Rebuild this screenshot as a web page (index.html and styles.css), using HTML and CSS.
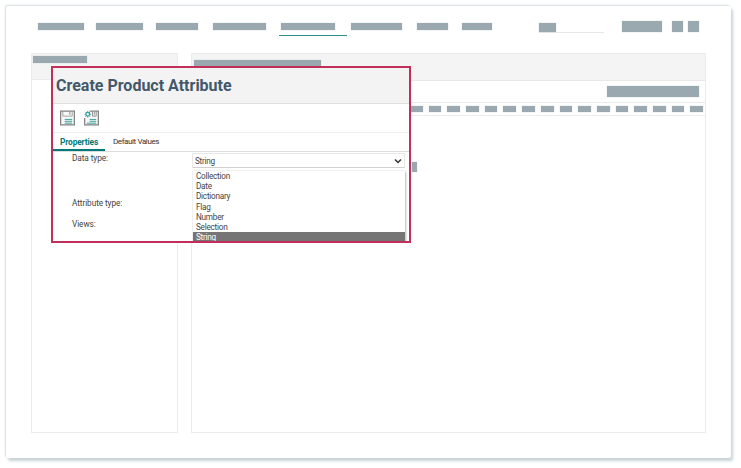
FILE: index.html
```html
<!DOCTYPE html>
<html lang="en">
<head>
    <meta charset="UTF-8">
    <meta name="viewport" content="width=device-width, initial-scale=1.0">
    <title>Create Product Attribute</title>
    <link rel="stylesheet" href="styles.css">
</head>
<body>
    <div class="window">
        <!-- Top navigation, blanked out -->
        <div class="topbar">
            <div class="nav">
                <div class="nav-item"><span class="bar w46"></span></div>
                <div class="nav-item"><span class="bar w47"></span></div>
                <div class="nav-item"><span class="bar w42"></span></div>
                <div class="nav-item"><span class="bar w53"></span></div>
                <div class="nav-item active"><span class="bar w54"></span></div>
                <div class="nav-item"><span class="bar w51"></span></div>
                <div class="nav-item"><span class="bar w31"></span></div>
                <div class="nav-item"><span class="bar w30"></span></div>
            </div>
            <div class="search"><span class="bar search-bar"></span></div>
            <div class="top-actions">
                <span class="bar action-wide"></span>
                <span class="bar action-small"></span>
                <span class="bar action-small"></span>
            </div>
        </div>

        <div class="panels">
            <div class="panel side-panel">
                <div class="side-head"><span class="bar w54"></span></div>
            </div>
            <div class="panel main-panel">
                <div class="main-head"><span class="bar w127"></span></div>
                <div class="main-tools"><span class="bar tools-bar"></span></div>
                <div class="main-tabs">
                    <span class="bar tab-bar"></span><span class="bar tab-bar"></span><span class="bar tab-bar"></span><span class="bar tab-bar"></span>
                    <span class="bar tab-bar"></span><span class="bar tab-bar"></span><span class="bar tab-bar"></span><span class="bar tab-bar"></span>
                    <span class="bar tab-bar"></span><span class="bar tab-bar"></span><span class="bar tab-bar"></span><span class="bar tab-bar"></span>
                    <span class="bar tab-bar"></span><span class="bar tab-bar"></span><span class="bar tab-bar"></span><span class="bar tab-bar"></span>
                </div>
            </div>
        </div>
    </div>

    <span class="bar stray-bar"></span>

    <!-- Highlighted dialog -->
    <div class="callout">
        <div class="callout-head">Create Product Attribute</div>
        <div class="toolbar">
            <svg class="tool-icon" viewBox="0 0 16 16" fill="none">
                <path d="M.7.7h14.600v14.600H.7z" stroke="#808080" stroke-width="1.300" fill="#f8f8f8"/>
                <path d="M3 1v5h10V1" stroke="#a0a0a0"/>
                <path d="M10.500 1.500v3" stroke="#808080"/>
                <path d="M5 9.500h8M5 11.500h8M5 13.500h8" stroke="#2f9c96"/>
            </svg>
            <svg class="tool-icon" viewBox="0 0 16 16" fill="none">
                <path d="M6 .7h9.300v14.600H.7V8" stroke="#808080" stroke-width="1.300" fill="#f8f8f8"/>
                <path d="M9 1v5h4V1M11 1.500v3" stroke="#8a8a8a"/>
                <path d="M6 9.500h7M6 11.500h7M3 13.500h10" stroke="#2f9c96"/>
                <circle cx="4" cy="4" r="2" stroke="#2f9c96" stroke-width="1.300"/>
                <path d="M4 .5v1.200M4 6.300v1.200M.5 4h1.200M6.300 4h1.200M1.500 1.500l.9.9M5.600 5.600l.9.9M1.500 6.500l.9-.9M5.600 2.400l.9-.9" stroke="#2f9c96"/>
            </svg>
        </div>
        <div class="tabs">
            <div class="tab selected">Properties</div>
            <div class="tab">Default Values</div>
        </div>
        <div class="form">
            <div class="field-labels">
                <div class="field-label first">Data type:</div>
                <div class="field-label second">Attribute type:</div>
                <div class="field-label">Views:</div>
            </div>
            <div class="field-inputs">
                <div class="select">
                    <span>String</span>
                    <svg class="chevron" viewBox="0 0 8 6" fill="none">
                        <path d="M1 1.500l3 3 3-3" stroke="#333" stroke-width="1.500"/>
                    </svg>
                </div>
                <div class="options">
                    <div class="option">Collection</div>
                    <div class="option">Date</div>
                    <div class="option">Dictionary</div>
                    <div class="option">Flag</div>
                    <div class="option">Number</div>
                    <div class="option">Selection</div>
                    <div class="option current">String</div>
                </div>
            </div>
        </div>
    </div>
</body>
</html>
```

FILE: styles.css
```css
body {
    margin: 0;
    height: 468px;
    overflow: hidden;
    position: relative;
    background-color: #fff;
    font-family: Roboto, Arial, sans-serif;
    color: #444;
}
.window {
    margin: 6px 0 0 6px;
    width: 725px;
    height: 452px;
    box-sizing: border-box;
    padding: 15px 25px 25px;
    background-color: #fff;
    border-radius: 2px;
    box-shadow: 2px 3px 3px #c9d3d7, -1px -1px 2px #d5dde0;
}
.bar {
    display: block;
    background-color: #9aa9af;
    box-shadow: 0 0 1px #b9c4c8;
}
.w30 { width: 30px; height: 7px; }
.w31 { width: 31px; height: 7px; }
.w42 { width: 42px; height: 7px; }
.w46 { width: 46px; height: 7px; }
.w47 { width: 47px; height: 7px; }
.w51 { width: 51px; height: 7px; }
.w53 { width: 53px; height: 7px; }
.w54 { width: 54px; height: 7px; }
.w127 { width: 127px; height: 7px; }

/* top navigation */
.topbar {
    display: flex;
    height: 32px;
}
.nav {
    display: flex;
    padding-left: 5px;
    width: 503px;
}
.nav-item {
    padding: 2px 2px 0;
    margin-right: 11px;
    height: 10px;
}
.nav-item:nth-child(1) { margin-right: 8px; }
.nav-item:nth-child(2) { margin-right: 9px; }
.nav-item:nth-child(7) { margin-right: 10px; }
.nav-item.active {
    padding: 2px 12px 2px 2px;
    margin-right: 2px;
    border-bottom: 1px solid #2f8f8f;
}
.search {
    width: 65px;
    height: 12px;
    box-sizing: border-box;
    padding-top: 2px;
    border-bottom: 1px solid #e8e8e8;
}
.search-bar { width: 17px; height: 9px; }
.top-actions {
    display: flex;
    gap: 5px;
    margin-left: 18px;
}
.action-wide { width: 40px; height: 11px; margin-right: 5px; }
.action-small { width: 11px; height: 11px; }

/* panels */
.panels {
    display: flex;
    gap: 13px;
    height: 380px;
}
.panel {
    box-sizing: border-box;
    height: 380px;
    border: 1px solid #ebebeb;
}
.side-panel { width: 147px; }
.main-panel { width: 515px; }
.side-head {
    height: 26px;
    box-sizing: border-box;
    padding: 2px 1px;
    background-color: #f4f4f4;
    border-bottom: 1px solid #ebebeb;
}
.main-head {
    height: 27px;
    box-sizing: border-box;
    padding: 6px 2px;
    background-color: #f4f4f4;
    border-bottom: 1px solid #e8e8e8;
}
.main-tools {
    display: flex;
    justify-content: flex-end;
    height: 22px;
    box-sizing: border-box;
    padding: 5px 6px 0 0;
    border-bottom: 1px solid #ebebeb;
}
.tools-bar { width: 92px; height: 11px; }
.main-tabs {
    display: flex;
    justify-content: flex-end;
    gap: 6px;
    height: 13px;
    box-sizing: border-box;
    padding: 3px 2px 0 0;
    border-bottom: 1px solid #ebebeb;
}
.tab-bar { width: 12.700px; height: 6px; }
.stray-bar {
    position: absolute;
    left: 412px;
    top: 162px;
    width: 5px;
    height: 10px;
}

/* highlighted dialog */
.callout {
    position: absolute;
    left: 51px;
    top: 66px;
    width: 360px;
    height: 177px;
    box-sizing: border-box;
    border: 2px solid #c1305a;
    background-color: #fff;
    overflow: hidden;
}
.callout-head {
    height: 36px;
    box-sizing: border-box;
    padding: 0 3px;
    line-height: 35px;
    font-size: 16px;
    font-weight: 700;
    color: #44586b;
    background-color: #f3f3f3;
    border-bottom: 1px solid #e0e0e0;
}
.toolbar {
    display: flex;
    gap: 9px;
    height: 29px;
    box-sizing: border-box;
    padding: 6px 0 0 7px;
    border-bottom: 1px solid #f0f0f0;
}
.tool-icon {
    width: 15px;
    height: 16px;
}
.tabs {
    display: flex;
    height: 18px;
    border-bottom: 1px solid #dcdcdc;
    line-height: 18px;
}
.tab {
    padding: 0 8px;
    font-size: 8px;
    letter-spacing: -0.4px;
    color: #333;
}
.tab.selected {
    width: 37px;
    padding-left: 7px;
    font-size: 8.300px;
    letter-spacing: -0.1px;
    font-weight: 700;
    color: #007a78;
    border-bottom: 2px solid #007a78;
    height: 16px;
}
.form {
    display: flex;
    font-size: 8.200px;
    letter-spacing: -0.25px;
}
.field-labels {
    width: 139px;
    padding-left: 19px;
    box-sizing: border-box;
    font-size: 8.300px;
    letter-spacing: -0.1px;
}
.field-label {
    line-height: 12px;
}
.field-label.second { margin-top: 33px; margin-bottom: 9px; }
.field-inputs {
    width: 213px;
}
.select {
    display: flex;
    align-items: center;
    justify-content: space-between;
    height: 15px;
    box-sizing: border-box;
    padding: 0 2px 0 2px;
    margin-top: 1px;
    border: 1px solid #e8e8e8;
    border-bottom-color: #d0d0d0;
    border-radius: 1px;
}
.chevron {
    width: 8px;
    height: 6px;
}
.options {
    margin: 3px 0 0 1px;
    width: 212px;
    box-shadow: 1px 1px 2px #bbb, 0 0 1px #bbb;
    background-color: #fff;
}
.option {
    height: 10.200px;
    line-height: 11.600px;
    padding-left: 3px;
}
.option.current {
    background-color: #757575;
    color: #fff;
}
```
